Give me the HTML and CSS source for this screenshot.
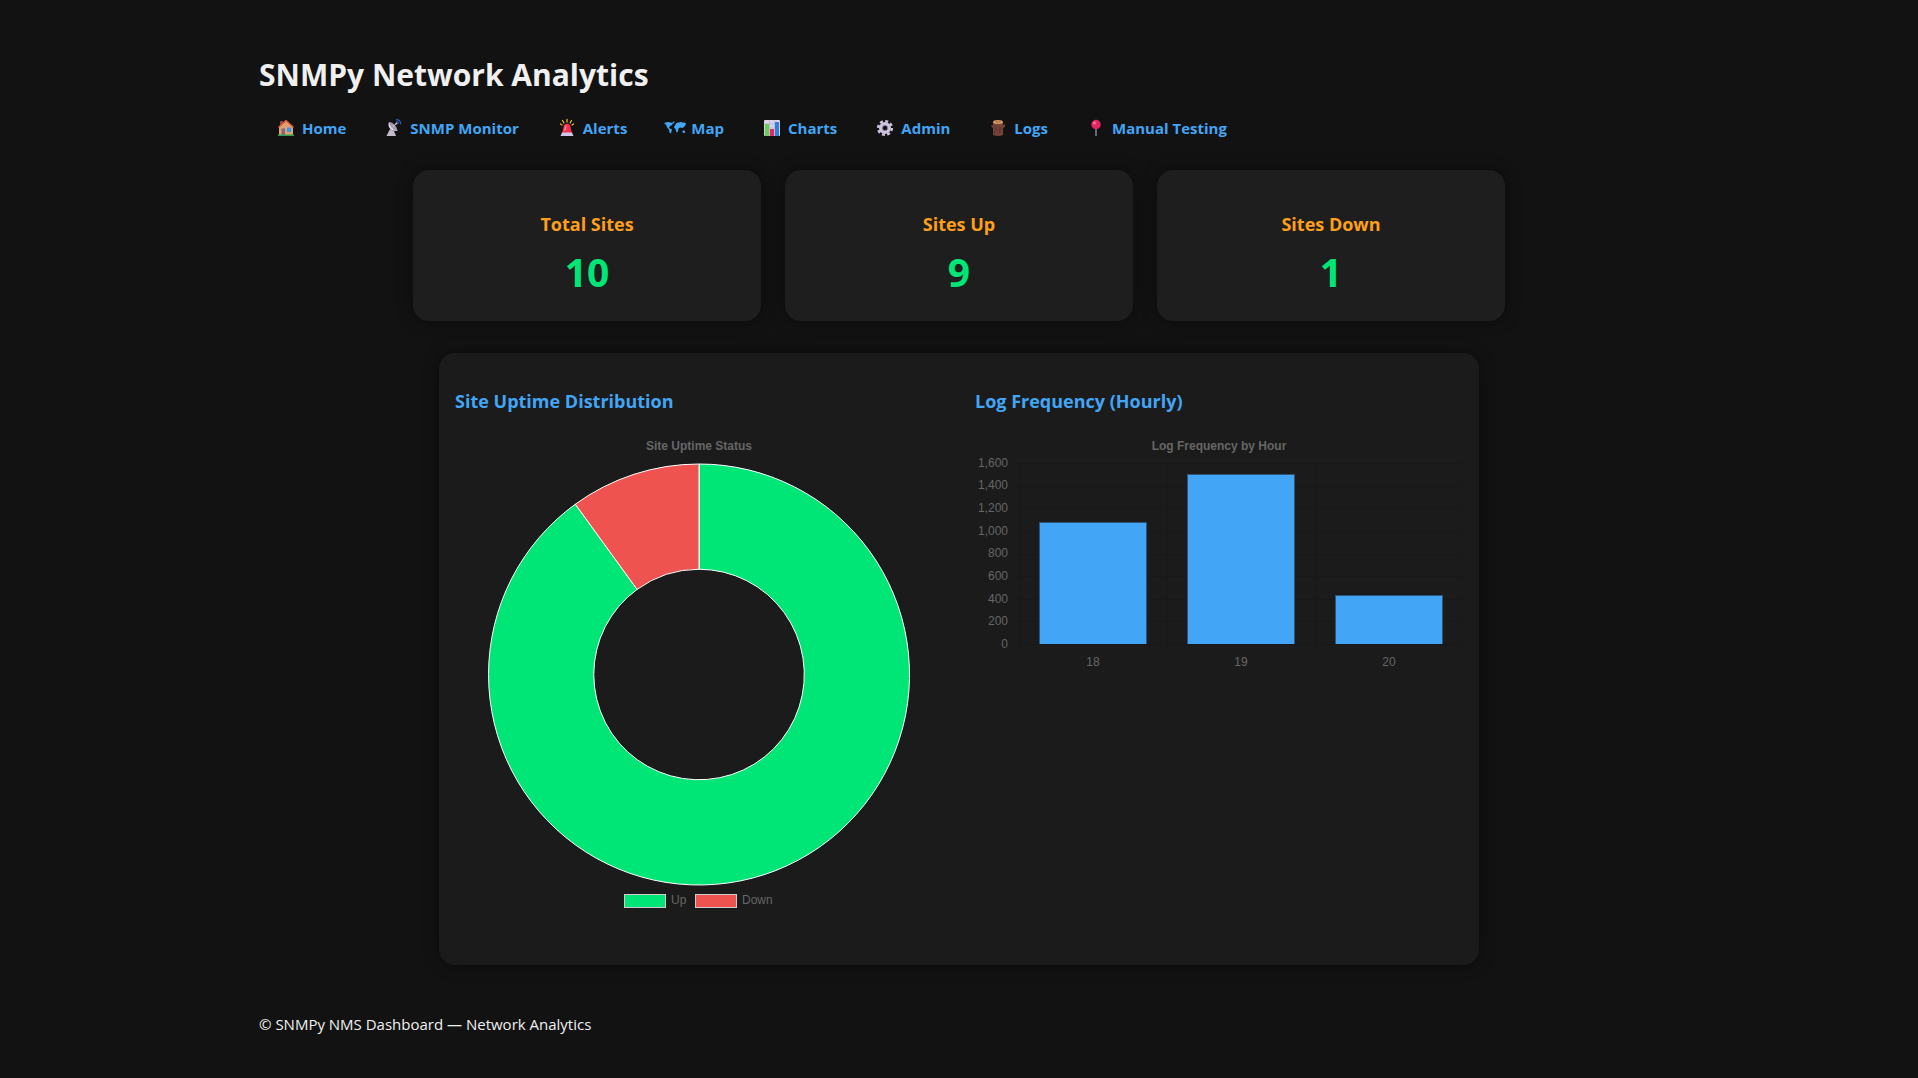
FILE: index.html
```html
<!DOCTYPE html>
<html lang="en">
<head>
<meta charset="utf-8">
<meta name="viewport" content="width=device-width, initial-scale=1">
<title>SNMPy Network Analytics</title>
<link rel="stylesheet" href="styles.css">
</head>
<body>
<div class="page">
  <header>
    <h1>SNMPy Network Analytics</h1>
    <nav class="nav">
      <a href="#home"><svg class="icon" viewBox="0 0 20 20" aria-hidden="true"><path fill="#8d4a3c" d="M4 3h3v5H4z"/><path fill="#e0a172" d="M3 9l7-6 7 6v8H3z"/><path fill="none" stroke="#e2603c" stroke-width="1.500" stroke-linejoin="round" stroke-linecap="round" d="M3 9l7-6.500L17 9"/><path fill="#8a6470" d="M5.500 10.500H9V17H5.500z"/><path fill="#2f9af0" d="M11 9.500h4V14h-4z"/><path fill="#2f9d55" d="M2 16.500h16V18H2z"/></svg>Home</a>
      <a href="#monitor"><svg class="icon" viewBox="0 0 20 20" aria-hidden="true"><path fill="#c4bacd" d="M6 11l4 2 2 5H2.500l1-2z"/><path fill="#ece5f0" d="M5 4c-2 5 2 9.500 8.500 9z"/><path fill="#a499b0" d="M5 4c3-.5 8 4 8.500 9C9 12 6 9 5 4z"/><path stroke="#d9cfe0" fill="none" d="M8.500 9l4-3.500"/><circle cx="12.500" cy="5.500" r="1" fill="#d9cfe0"/><path stroke="#2c5dbd" fill="none" stroke-width="1.200" d="M12 3.500c1.500 0 2.500 1 2.500 2.500M12 1.600c3 0 4.700 1.700 4.700 4.700"/></svg>SNMP Monitor</a>
      <a href="#alerts"><svg class="icon" viewBox="0 0 20 20" aria-hidden="true"><path stroke="#f2b632" fill="none" stroke-width="1.300" stroke-linecap="round" d="M10 1.500V4M5.500 2.500L7 5M14.500 2.500L13 5M3.500 6l1.500 1M16.500 6L15 7"/><path fill="#f7304f" d="M7 7q3-2.500 6 0l2 8.500H5z"/><path fill="#ff8293" d="M8 8l1.500-.8L9 12l-2 1z"/><path fill="#cfc5ea" d="M5 14.500h10l1.500 3.500h-13z"/></svg>Alerts</a>
      <a href="#map"><svg class="icon" viewBox="0 0 20 20" aria-hidden="true"><path fill="#42a5f5" d="M-1 5l4-1 5 1-1 2-2 1-1 2 3 1.500-1 4-1.500-1-.5-3-2-2-.5-2zM7 4l3-.5-1.500 2zM9.500 8l2-3 4-1L21 5l-.5 2-1.500 2-1.500 1L15 9.500l-1.500 1-.5 3-1.500 1-1-3.500-1.500-1.500zM17 13l2.500-.8.800 2.500-2 .3z"/></svg>Map</a>
      <a href="#charts"><svg class="icon" viewBox="0 0 20 20" aria-hidden="true"><rect x="2" y="2" width="16" height="16" rx="1" fill="#dcd2e8"/><path stroke="#b9accb" stroke-width=".6" d="M2 6h16M2 10h16M2 14h16M7.500 2v16M12.500 2v16"/><path fill="#65cf52" d="M3 6h4v12H3z"/><path fill="#e22868" d="M8 11h4v7H8z"/><path fill="#2b83d8" d="M13 4h4v14h-4z"/></svg>Charts</a>
      <a href="#admin"><svg class="icon" viewBox="0 0 20 20" aria-hidden="true"><circle cx="10" cy="10" r="6.800" fill="none" stroke="#cfc4de" stroke-width="2.600" stroke-dasharray="3 2.340"/><circle cx="10" cy="10" r="4.300" fill="none" stroke="#cfc4de" stroke-width="3.400"/><circle cx="10" cy="10" r="2.700" fill="none" stroke="#8e819f"/></svg>Admin</a>
      <a href="#logs"><svg class="icon" viewBox="0 0 20 20" aria-hidden="true"><path fill="#754238" d="M5 4h10v13q-5 2-10 0V10L3.500 9V7L5 7.500zM15 7l2-1v3l-2 1z"/><path stroke="#55302a" fill="none" d="M8 8v5M12 9v6M6.500 13v3"/><ellipse cx="10" cy="4" rx="5" ry="2" fill="#d79a63"/><ellipse cx="10" cy="4" rx="2.500" ry=".9" fill="none" stroke="#a9683f" stroke-width=".7"/></svg>Logs</a>
      <a href="#testing"><svg class="icon" viewBox="0 0 20 20" aria-hidden="true"><path fill="#91879c" d="M9.300 9h1.400v8.500L10 18.500l-.7-1z"/><circle cx="10" cy="6.500" r="4.700" fill="#e62462"/><circle cx="8.500" cy="5" r="1.500" fill="#ff7c9f"/></svg>Manual Testing</a>
    </nav>
  </header>

  <main>
    <section class="cards">
      <article class="card"><h3>Total Sites</h3><p>10</p></article>
      <article class="card"><h3>Sites Up</h3><p>9</p></article>
      <article class="card"><h3>Sites Down</h3><p>1</p></article>
    </section>

    <section class="charts">
      <div class="chart">
        <h3>Site Uptime Distribution</h3>
        <svg viewBox="0 0 488 488" role="img" aria-label="Site Uptime Status">
          <text class="chart-title" x="244" y="20">Site Uptime Status</text>
          <g class="slices">
            <path fill="#00e676" d="M244 34A210.500 210.500 0 1 1 120.300 74.200L182.100 159.400A105.250 105.250 0 1 0 244 139.250z"/>
            <path fill="#ef5350" d="M120.300 74.200A210.500 210.500 0 0 1 244 34V139.250A105.250 105.250 0 0 0 182.100 159.400z"/>
          </g>
          <g class="swatches">
            <rect x="169.500" y="464.500" width="41" height="13" fill="#00e676"/>
            <rect x="240.500" y="464.500" width="41" height="13" fill="#ef5350"/>
          </g>
          <text x="216" y="474">Up</text>
          <text x="287" y="474">Down</text>
        </svg>
      </div>
      <div class="chart">
        <h3>Log Frequency (Hourly)</h3>
        <svg viewBox="0 0 488 244" role="img" aria-label="Log Frequency by Hour">
          <text class="chart-title" x="244" y="20">Log Frequency by Hour</text>
          <path class="grid" d="M36 33.500H488M36 56.500H488M36 78.500H488M36 101.500H488M36 124.500H488M36 146.500H488M36 169.500H488M36 191.500H488M36 214.500H488M44.500 33V222M192.500 33V222M340.500 33V222M488 33V222"/>
          <g class="bars">
            <path d="M64.500 214V92.500H171.500V214"/>
            <path d="M212.500 214V44.500H319.500V214"/>
            <path d="M360.500 214V165.500H467.500V214"/>
          </g>
          <g class="y-ticks">
            <text x="33" y="37">1,600</text><text x="33" y="59">1,400</text><text x="33" y="82">1,200</text>
            <text x="33" y="105">1,000</text><text x="33" y="127">800</text><text x="33" y="150">600</text>
            <text x="33" y="173">400</text><text x="33" y="195">200</text><text x="33" y="218">0</text>
          </g>
          <g class="x-ticks">
            <text x="118" y="236">18</text><text x="266" y="236">19</text><text x="414" y="236">20</text>
          </g>
        </svg>
      </div>
    </section>
  </main>

  <footer>© SNMPy NMS Dashboard — Network Analytics</footer>
</div>
</body>
</html>
```
FILE: styles.css
```css
* { box-sizing: border-box; }

body {
  margin: 0;
  background: #121212;
  color: #f0f0f0;
  font: 15px/24px "Segoe UI", "Open Sans", "Noto Sans", sans-serif;
}

.page {
  max-width: 1400px;
  margin: 0 auto;
  padding: 51px 0 40px;
}

h1, h3, p { margin: 0; }

h1 {
  font-size: 30px;
  line-height: 48px;
}

.nav {
  display: flex;
  flex-wrap: wrap;
  gap: 8px 38px;
  margin-top: 17px;
  padding: 0 17px;
}

.nav a {
  display: flex;
  align-items: center;
  gap: 6px;
  color: #42a5f5;
  font-weight: 700;
  text-decoration: none;
}

.icon {
  width: 20px;
  height: 20px;
  overflow: visible;
}

.cards {
  display: flex;
  flex-wrap: wrap;
  justify-content: center;
  gap: 24px;
  margin-top: 30px;
}

.card {
  flex: 0 1 348px;
  padding: 40px 24px 22px;
  border-radius: 16px;
  background: #1e1e1e;
  box-shadow: 0 0 16px rgba(0, 0, 0, 0.4);
  text-align: center;
}

.card h3 {
  color: #ff9f1a;
  font-size: 18px;
  line-height: 28px;
}

.card p {
  margin-top: 7px;
  color: #00e676;
  font-size: 39px;
  font-weight: 700;
  line-height: 54px;
}

.charts {
  display: grid;
  grid-template-columns: repeat(auto-fit, minmax(320px, 1fr));
  gap: 32px;
  max-width: 1040px;
  margin: 32px auto 0;
  padding: 32px 16px 47px;
  border-radius: 16px;
  background: #1b1b1b;
  box-shadow: 0 0 16px rgba(0, 0, 0, 0.4);
}

.chart h3 {
  margin-bottom: 13px;
  color: #42a5f5;
  font-size: 18px;
  line-height: 32px;
}

.chart svg {
  display: block;
  width: 100%;
  font: 12px "Liberation Sans", Arial, sans-serif;
  fill: #666;
}

.chart-title { font-weight: 700; text-anchor: middle; }
.slices { stroke: #fff; stroke-width: 1; stroke-linejoin: bevel; }
.swatches { stroke: #ccc; stroke-width: 1; }
.grid { stroke: #181818; fill: none; }
.bars { fill: #42a5f5; stroke: #2c5578; }
.y-ticks { text-anchor: end; }
.x-ticks { text-anchor: middle; }

footer { margin-top: 47px; }
```
